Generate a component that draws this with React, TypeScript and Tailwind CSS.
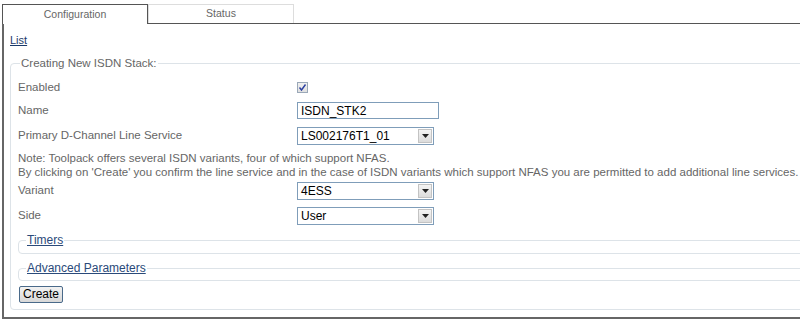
import React from "react";

function Select({ value }: { value: string }) {
  return (
    <div className="flex h-[18px] w-[137px] items-center border border-[#7f9db9] bg-white">
      <span className="flex-1 pl-[3px] text-[12px] leading-none text-black">{value}</span>
      <div className="mr-[1px] flex h-[14px] w-[14px] items-center justify-center border border-[#c3c3c3] bg-gradient-to-b from-[#f4f4f4] to-[#dcdcdc]">
        <svg width="7" height="4" viewBox="0 0 7 4">
          <path d="M0 0 L7 0 L3.5 4 Z" fill="#222" />
        </svg>
      </div>
    </div>
  );
}

function Row({ label, children, h = "h-[25px]" }: { label: string; children: React.ReactNode; h?: string }) {
  return (
    <div className={`flex items-center ${h}`}>
      <div className="w-[279px] text-[11.5px] text-[#666]">{label}</div>
      {children}
    </div>
  );
}

export default function App() {
  return (
    <div className="h-[327px] w-[800px] overflow-hidden bg-white" style={{ fontFamily: '"Liberation Sans", Arial, sans-serif' }}>
      <div className="pt-[4px]">
        {/* tabs */}
        <div className="flex h-[20px]">
          <div className="ml-[2px] flex w-[146px] items-center justify-center border-x border-t border-[#555] bg-white text-[10.5px] text-[#666]">
            Configuration
          </div>
          <div className="flex flex-1 items-end border-b border-[#555]">
            <div className="flex h-[19px] w-[146px] items-center justify-center border-x border-t border-[#ddd] text-[10.5px] text-[#666]">
              Status
            </div>
          </div>
        </div>
        {/* panel */}
        <div className="ml-[2px] h-[295px] border-b-2 border-l-2 border-[#666] pl-[6px]">
          <div className="pt-[9px] text-[11px] leading-[14px]">
            <a className="text-[#1a3a6a] underline">List</a>
          </div>
          <fieldset className="mt-[8px] mr-[-20px] rounded-[4px] border border-[#dde3e8] pb-[4px] pl-[7px] pt-0">
            <legend className="ml-[2px] px-[1px] text-[11.5px] text-[#666]">Creating New ISDN Stack:</legend>
            <div className="pt-[4px]">
              <Row label="Enabled" h="h-[22px]">
                <div className="flex h-[11px] w-[11px] items-center justify-center border border-[#9aa8b8] bg-gradient-to-b from-[#f0f0f0] to-[#e0e0e0]">
                  <svg width="9" height="9" viewBox="0 0 9 9">
                    <path d="M1.5 4.5 L3.5 7 L7.5 1.5" stroke="#2a3fa0" strokeWidth="1.4" fill="none" />
                  </svg>
                </div>
              </Row>
              <Row label="Name">
                <div className="flex h-[17px] w-[142px] items-center border border-[#7f9db9] pl-[3px] text-[12px] text-black">ISDN_STK2</div>
              </Row>
              <Row label="Primary D-Channel Line Service">
                <Select value="LS002176T1_01" />
              </Row>
              <div className="pt-[3px] text-[11.5px] leading-[14px] text-[#666]">
                <div>Note: Toolpack offers several ISDN variants, four of which support NFAS.</div>
                <div className="whitespace-nowrap">By clicking on 'Create' you confirm the line service and in the case of ISDN variants which support NFAS you are permitted to add additional line services.</div>
              </div>
              <Row label="Variant" h="h-[23px]">
                <Select value="4ESS" />
              </Row>
              <Row label="Side" h="h-[27px]">
                <Select value="User" />
              </Row>
              <fieldset className="mt-[5px] h-[20px] rounded-[4px] border border-[#dde3e8] pl-[7px]">
                <legend className="px-[1px] text-[12px] leading-[12px] text-[#2a4a7a] underline">Timers</legend>
              </fieldset>
              <fieldset className="mt-[8px] h-[19px] rounded-[4px] border border-[#dde3e8] pl-[7px]">
                <legend className="px-[1px] text-[12px] leading-[12px] text-[#2a4a7a] underline">Advanced Parameters</legend>
              </fieldset>
              <button className="mt-[1px] ml-[1px] h-[17px] rounded-[2px] border border-[#4a6a8a] bg-gradient-to-b from-[#f2f2f2] to-[#d8d8d8] px-[3px] text-[12px] leading-none text-black">
                Create
              </button>
            </div>
          </fieldset>
        </div>
      </div>
    </div>
  );
}
